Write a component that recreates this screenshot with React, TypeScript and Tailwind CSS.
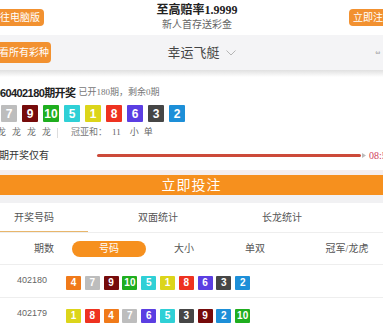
import React from "react";

const ballColors: Record<number, string> = {
  1: "bg-[#dcd51a]",
  2: "bg-[#1d8fd8]",
  3: "bg-[#464646]",
  4: "bg-[#f07a1a]",
  5: "bg-[#2fd0d6]",
  6: "bg-[#5b3ee2]",
  7: "bg-[#bdbdbd]",
  8: "bg-[#ee3220]",
  9: "bg-[#760b0b]",
  10: "bg-[#1fae1f]",
};

const Ball = ({ n, big }: { n: number; big?: boolean }) => (
  <div
    className={`${ballColors[n]} ${
      big ? "w-[16px] h-[17px] text-[12px]" : "w-[15px] h-[14px] text-[10px]"
    } flex shrink-0 items-center justify-center font-bold text-white font-['Liberation_Sans',sans-serif] rounded-[1px]`}
  >
    {n}
  </div>
);

const rows = [
  { issue: "402180", nums: [4, 7, 9, 10, 5, 1, 8, 6, 3, 2] },
  { issue: "402179", nums: [1, 8, 4, 7, 6, 5, 3, 9, 2, 10] },
];

export default function App() {
  return (
    <div className="w-[383px] h-[328px] overflow-hidden bg-white font-['Liberation_Serif','Noto_Sans_CJK_SC',serif]">
      {/* header */}
      <div className="h-[35px] grid grid-cols-[1fr_auto_1fr] items-center">
        <div className="flex">
          <div className="-ml-[14px] shrink-0 h-[17px] pl-[4px] pr-[4px] flex items-center rounded-[4px] bg-[#f29130] text-white text-[10px] whitespace-nowrap">
            前往电脑版
          </div>
        </div>
        <div className="ml-[11px] flex flex-col items-center">
          <div className="text-[12px] leading-[13px] font-bold text-[#222] whitespace-nowrap">至高赔率1.9999</div>
          <div className="mt-[2px] text-[10px] leading-[12px] text-[#666] whitespace-nowrap">新人首存送彩金</div>
        </div>
        <div className="flex justify-end">
          <div className="-mr-[14px] shrink-0 h-[17px] pl-[4px] pr-[4px] flex items-center rounded-[4px] bg-[#f29130] text-white text-[10px] whitespace-nowrap">
            立即注册
          </div>
        </div>
      </div>

      {/* lottery bar */}
      <div className="h-[35px] bg-[#f4f4f6] grid grid-cols-[1fr_auto_1fr] items-center">
        <div className="flex">
          <div className="-ml-[14px] shrink-0 h-[21px] pl-[3px] pr-[2px] flex items-center rounded-[4px] bg-[#f29130] text-white text-[10px] whitespace-nowrap">
            查看所有彩种
          </div>
        </div>
        <div className="ml-[20px] flex items-center">
          <span className="text-[13px] text-[#444] whitespace-nowrap">幸运飞艇</span>
          <svg className="ml-[6px]" width="10" height="6" viewBox="0 0 10 6">
            <polyline points="0.5,0.5 5,5 9.5,0.5" fill="none" stroke="#b5b5b5" strokeWidth="1" />
          </svg>
        </div>
        <div className="flex justify-end pr-[3px]">
          <span className="text-[7px] text-[#888]">ω</span>
        </div>
      </div>
      <div className="h-[7px] bg-linear-to-b from-[#e0e0e0] to-white" />

      {/* current draw */}
      <div className="pt-[10px]">
        <div className="h-[12px] flex items-center whitespace-nowrap -ml-[11px]">
          <span className="shrink-0 text-[11px] font-semibold text-[#222] font-['Liberation_Sans','Noto_Sans_CJK_SC',sans-serif] tracking-[-0.6px]">
            2060402180期开奖
          </span>
          <span className="shrink-0 ml-[3px] text-[9px] text-[#777]">已开180期，剩余0期</span>
        </div>
        <div className="mt-[6px] flex gap-[5px] -ml-[20px]">
          {[4, 7, 9, 10, 5, 1, 8, 6, 3, 2].map((n, i) => (
            <Ball key={i} n={n} big />
          ))}
        </div>
        <div className="mt-[5px] h-[11px] flex items-center text-[9px] text-[#666] whitespace-nowrap -ml-[3px]">
          <div className="flex gap-[6px]">
            <span>龙</span>
            <span>龙</span>
            <span>龙</span>
            <span>龙</span>
          </div>
          <div className="ml-[6px] w-px h-[10px] bg-[#ddd]" />
          <span className="ml-[13px] text-[#777]">冠亚和：</span>
          <span className="ml-[5px]">11</span>
          <span className="ml-[9px]">小</span>
          <span className="ml-[5px]">单</span>
        </div>
        <div className="mt-[10px] h-[14px] flex items-center whitespace-nowrap">
          <span className="shrink-0 -ml-[11px] text-[10px] text-[#333]">下期开奖仅有</span>
          <div className="shrink-0 ml-[48px] w-[264px] h-[3px] rounded-full bg-[#cc4a3a]" />
          <svg className="shrink-0 ml-[1px]" width="4" height="5" viewBox="0 0 4 5">
            <polygon points="0,0 4,2.5 0,5" fill="#bbb" />
          </svg>
          <span className="shrink-0 ml-[3px] text-[10px] text-[#d0405a]">08:59</span>
        </div>
        <div className="h-[8px]" />
      </div>

      <div className="h-[5px] bg-[#f5eeee]" />
      <div className="h-[20px] bg-[#f6901e] flex items-center justify-center text-white text-[14px] tracking-[1px]">
        立即投注
      </div>
      <div className="h-[8px] bg-[#f1f1f3]" />

      {/* tabs */}
      <div className="h-[30px] border-b border-[#eee]">
        <div className="-ml-[28px] w-[372px] h-full grid grid-cols-3 text-[10px] text-[#555]">
          <div className="flex flex-col">
            <div className="flex-1 flex items-center justify-center">开奖号码</div>
            <div className="ml-[28px] w-[88px] h-px bg-[#e8b66b]" />
          </div>
          <div className="flex items-center justify-center">双面统计</div>
          <div className="flex items-center justify-center">长龙统计</div>
        </div>
      </div>

      {/* sub tabs */}
      <div className="h-[31px] flex items-center text-[10px] text-[#555] whitespace-nowrap">
        <div className="shrink-0 w-[72px] pl-[16px] text-center">期数</div>
        <div className="shrink-0 w-[74px] h-[16px] rounded-full bg-[#f6901e] text-white flex items-center justify-center">号码</div>
        <div className="shrink-0 w-[76px] text-center">大小</div>
        <div className="shrink-0 w-[66px] text-center">单双</div>
        <div className="shrink-0 w-[118px] text-center">冠军/龙虎</div>
      </div>

      {/* results */}
      {rows.map((r) => (
        <div key={r.issue} className="h-[33px] border-t border-[#eee] flex items-center">
          <div className="w-[66px] pl-[17px] text-[9px] text-[#666] font-['Liberation_Sans',sans-serif]">{r.issue}</div>
          <div className="flex gap-[3.8px] mt-[3px]">
            {r.nums.map((n, i) => (
              <Ball key={i} n={n} />
            ))}
          </div>
        </div>
      ))}
    </div>
  );
}
